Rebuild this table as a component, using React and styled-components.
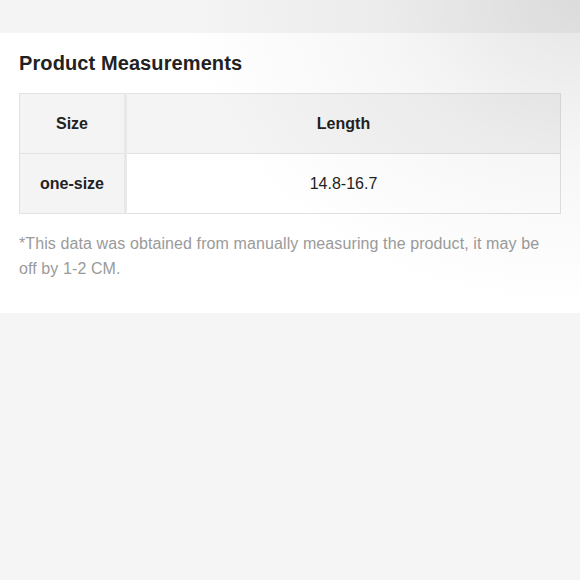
import React from "react";
import styled, { createGlobalStyle } from "styled-components";

const GlobalStyle = createGlobalStyle`
  body {
    margin: 0;
    background: #f5f5f5;
    font-family: "Liberation Sans", Arial, sans-serif;
  }
`;

const rows = [{ size: "one-size", length: "14.8-16.7" }];

const App = () => {
  return (
    <StPage>
      <GlobalStyle />
      <StTopBand />
      {/* -------------- Measurements panel -------------- */}
      <StPanel>
        <StTitle>Product Measurements</StTitle>
        <StTable>
          <thead>
            <tr>
              <StCell $head $first>Size</StCell>
              <StCell $head>Length</StCell>
            </tr>
          </thead>
          <tbody>
            {rows.map((r) => (
              <tr key={r.size}>
                <StCell $first>{r.size}</StCell>
                <StCell>{r.length}</StCell>
              </tr>
            ))}
          </tbody>
        </StTable>
        <StNote>
          *This data was obtained from manually measuring the product, it may be
          off by 1-2 CM.
        </StNote>
      </StPanel>
      <StShade />
    </StPage>
  );
};

export default App;

const StPage = styled.div`
  position: relative;
  width: 580px;
  height: 580px;
  overflow: hidden;
  background: #f5f5f5;
`;

const StTopBand = styled.div`
  height: 33px;
  background: #f4f4f4;
`;

const StPanel = styled.div`
  background: #fff;
  padding: 18px 19px 32px;
`;

const StTitle = styled.h2`
  margin: 0 0 18px;
  font-size: 20px;
  line-height: 24px;
  font-weight: 700;
  color: #222;
  letter-spacing: 0.1px;
`;

const StTable = styled.table`
  width: 100%;
  border-collapse: collapse;
  table-layout: fixed;
  border: 1px solid #e2e2e2;
`;

const StCell = styled.td`
  height: 59px;
  padding: 0;
  text-align: center;
  vertical-align: middle;
  font-size: 16px;
  color: #222;
  font-weight: ${(p) => (p.$first || p.$head ? 700 : 400)};
  background: ${(p) => (p.$first || p.$head ? "#f4f4f4" : "#fff")};
  border: 1px solid #e2e2e2;
  width: ${(p) => (p.$first ? "104px" : "auto")};
  ${(p) => p.$first && "border-right: 3px solid #e8e8e8;"}
`;

const StNote = styled.p`
  margin: 17px 0 0;
  max-width: 526px;
  font-size: 16px;
  line-height: 25px;
  letter-spacing: 0.1px;
  color: #9a9a9a;
`;

const StShade = styled.div`
  position: absolute;
  top: 0;
  right: 0;
  width: 400px;
  height: 313px;
  pointer-events: none;
  background: radial-gradient(
    ellipse at top right,
    rgba(0, 0, 0, 0.1) 0%,
    rgba(0, 0, 0, 0.035) 35%,
    rgba(0, 0, 0, 0) 70%
  );
`;
